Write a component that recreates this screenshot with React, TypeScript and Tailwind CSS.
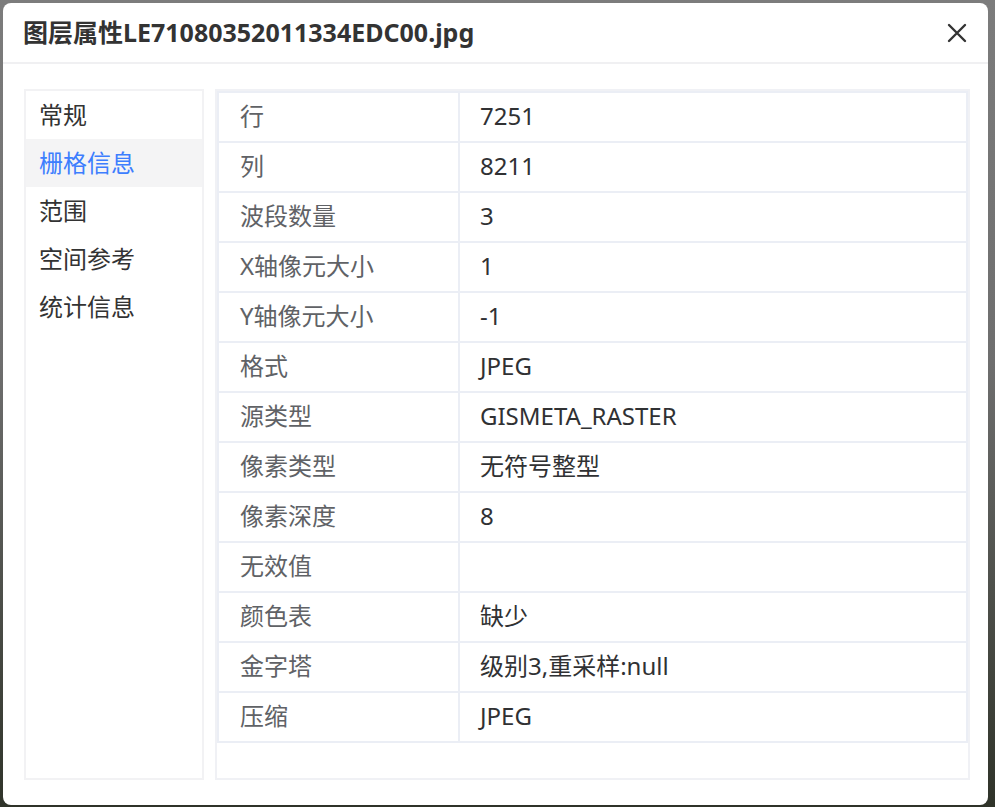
import { useState } from "react";

const navItems = ["常规", "栅格信息", "范围", "空间参考", "统计信息"];

const rows: [string, string][] = [
  ["行", "7251"],
  ["列", "8211"],
  ["波段数量", "3"],
  ["X轴像元大小", "1"],
  ["Y轴像元大小", "-1"],
  ["格式", "JPEG"],
  ["源类型", "GISMETA_RASTER"],
  ["像素类型", "无符号整型"],
  ["像素深度", "8"],
  ["无效值", ""],
  ["颜色表", "缺少"],
  ["金字塔", "级别3,重采样:null"],
  ["压缩", "JPEG"],
];

export default function App() {
  const [active, setActive] = useState(1);

  return (
    <div
      className="h-[807px] w-[995px] overflow-hidden bg-[linear-gradient(180deg,#7c7c7c_0%,#6e6e6e_45%,#2f3329_100%)] pl-[3px] pt-[3px]"
      style={{ fontFamily: '"Noto Sans", "Noto Sans CJK SC", sans-serif' }}
    >
      <div className="flex h-[802px] w-[985px] flex-col rounded-[8px] bg-white">
        <div className="flex h-[61px] shrink-0 items-center justify-between border-b-2 border-[#f0f0f2] pl-[20px] pr-[18px]">
          <h1 className="text-[25px] font-bold leading-none text-[#333333]">
            图层属性LE71080352011334EDC00.jpg
          </h1>
          <button className="flex h-[26px] w-[26px] items-center justify-center text-[#333333]">
            <svg width="20" height="20" viewBox="0 0 20 20" fill="none">
              <path d="M2 2L18 18M18 2L2 18" stroke="currentColor" strokeWidth="2.4" strokeLinecap="round" />
            </svg>
          </button>
        </div>

        <div className="flex flex-1 gap-[11px] pb-[25px] pl-[21px] pr-[18px] pt-[25px]">
          <div className="w-[180px] shrink-0 border-2 border-[#f2f2f4]">
            {navItems.map((item, i) => (
              <div
                key={item}
                onClick={() => setActive(i)}
                className={
                  i === active
                    ? "flex h-[48px] cursor-pointer items-center bg-[#f4f4f5] pl-[13px] text-[24px] text-[#3d7efe]"
                    : "flex h-[48px] cursor-pointer items-center pl-[13px] text-[24px] text-[#333333]"
                }
              >
                {item}
              </div>
            ))}
          </div>

          <div className="flex-1 border-2 border-[#f0f1f5]">
            <table className="w-full border-collapse">
              <tbody>
                {rows.map(([label, value]) => (
                  <tr key={label} className="h-[50px]">
                    <td className="w-[241px] border-2 border-[#ebeef5] pb-[2px] pl-[21px] text-[24px] text-[#606266]">
                      {label}
                    </td>
                    <td className="border-2 border-[#ebeef5] pb-[2px] pl-[20px] text-[24px] text-[#303133]">
                      {value}
                    </td>
                  </tr>
                ))}
              </tbody>
            </table>
          </div>
        </div>
      </div>
    </div>
  );
}
